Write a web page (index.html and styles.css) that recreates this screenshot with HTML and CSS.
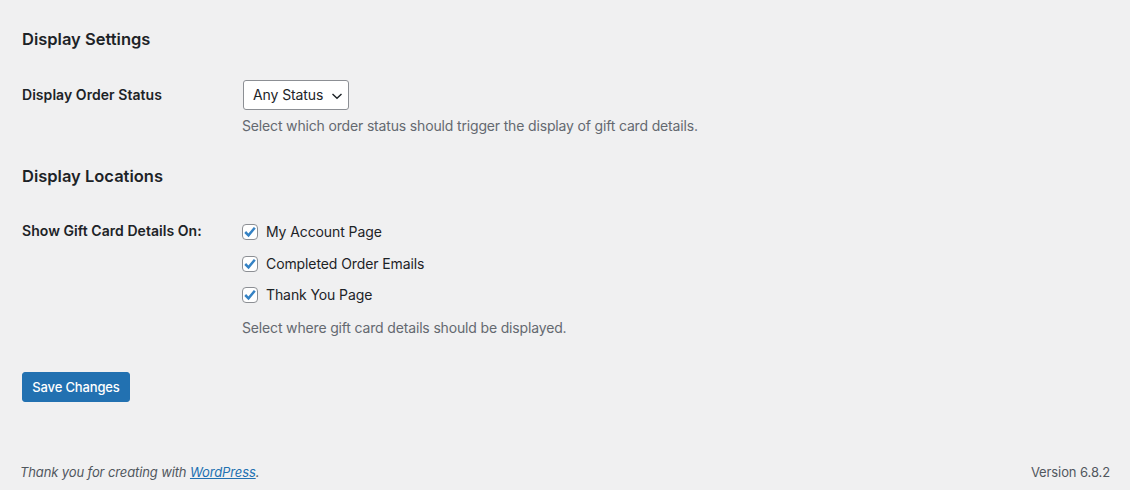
FILE: index.html
```html
<!DOCTYPE html>
<html lang="en">
<head>
<meta charset="utf-8">
<title>Gift Card Settings</title>
<link rel="stylesheet" href="styles.css">
</head>
<body>
<div class="page">
  <div class="wrap">
    <h2 class="section-title first">Display Settings</h2>
    <div class="form-row row-status">
      <div class="label">Display Order Status</div>
      <div class="field">
        <div class="select">
          <span>Any Status</span>
          <svg class="chev" width="14" height="12" viewBox="0 0 14 12"><path d="M2.5 4 L7 8.3 L11.5 4" fill="none" stroke="#1d2327" stroke-width="1.4"/></svg>
        </div>
        <p class="description">Select which order status should trigger the display of gift card details.</p>
      </div>
    </div>

    <h2 class="section-title second">Display Locations</h2>
    <div class="form-row row-locations">
      <div class="label">Show Gift Card Details On:</div>
      <div class="field">
        <label class="check"><span class="box"><svg width="14" height="14" viewBox="0 0 14 14"><path d="M2.2 7 L5.5 10.3 L11.8 2.8" fill="none" stroke="#3582c4" stroke-width="2.5"/></svg></span>My Account Page</label>
        <label class="check"><span class="box"><svg width="14" height="14" viewBox="0 0 14 14"><path d="M2.2 7 L5.5 10.3 L11.8 2.8" fill="none" stroke="#3582c4" stroke-width="2.5"/></svg></span>Completed Order Emails</label>
        <label class="check"><span class="box"><svg width="14" height="14" viewBox="0 0 14 14"><path d="M2.2 7 L5.5 10.3 L11.8 2.8" fill="none" stroke="#3582c4" stroke-width="2.5"/></svg></span>Thank You Page</label>
        <p class="description desc-loc">Select where gift card details should be displayed.</p>
      </div>
    </div>

    <div class="submit">
      <button class="button-primary" type="button">Save Changes</button>
    </div>
  </div>

  <footer class="footer">
    <p class="thanks">Thank you for creating with <a href="#">WordPress</a>.</p>
    <p class="version">Version 6.8.2</p>
  </footer>
</div>
</body>
</html>
```

FILE: styles.css
```css
* { box-sizing: border-box; }
html, body {
  margin: 0;
  padding: 0;
  background: #f0f0f1;
}
body {
  font-family: Inter, "Noto Sans", sans-serif;
  color: #1d2327;
  font-size: 14px;
  line-height: 1.4;
}
.page {
  width: 1130px;
  height: 490px;
  display: flex;
  flex-direction: column;
}
.wrap {
  padding: 0 22px;
  flex: 1;
}
.section-title {
  font-size: 16.5px;
  font-weight: 600;
  margin: 0;
  line-height: 22px;
  letter-spacing: 0;
}
.section-title.first { padding-top: 28px; }
.section-title.second { margin-top: 28px; }
.form-row {
  display: grid;
  grid-template-columns: 220px 1fr;
}
.row-status { margin-top: 30px; }
.label {
  font-weight: 600;
  font-size: 14px;
  line-height: 20px;
  letter-spacing: 0.05px;
}
.row-status .label { padding-top: 5px; }
.field { display: flex; flex-direction: column; align-items: flex-start; }
.select {
  margin-left: 1px;
  width: 106px;
  height: 30px;
  border: 1px solid #8c8f94;
  border-radius: 3px;
  background: #fff;
  display: flex;
  align-items: center;
  justify-content: space-between;
  padding: 0 4px 0 9px;
  font-size: 14px;
  letter-spacing: -0.1px;
}
.chev { display: block; margin-top: 1px; }
.description {
  margin: 5px 0 0;
  color: #646970;
  font-size: 14px;
  line-height: 22px;
  letter-spacing: -0.16px;
}
.row-locations { margin-top: 34px; }
.row-locations .field { padding-top: 3px; }
.check {
  display: flex;
  align-items: center;
  height: 16px;
  margin-bottom: 16px;
  font-size: 14px;
  letter-spacing: -0.1px;
}
.check:nth-child(2) { margin-bottom: 15px; }
.check:nth-child(3) { margin-bottom: 14px; }
.box {
  width: 16px;
  height: 16px;
  border: 1px solid #8c8f94;
  border-radius: 4px;
  background: #fff;
  margin-right: 8px;
  display: flex;
  align-items: center;
  justify-content: center;
}
.box svg { display: block; }
.desc-loc { margin-top: 0; }
.submit { margin-top: 33px; }
.button-primary {
  font-family: inherit;
  background: #2271b1;
  border: 1px solid #2271b1;
  color: #fff;
  border-radius: 3px;
  width: 108px;
  height: 30px;
  font-size: 13px;
  font-weight: 500;
  padding: 0;
  letter-spacing: -0.15px;
}
.footer {
  display: flex;
  justify-content: space-between;
  padding: 0 20px 8px 20px;
  color: #50575e;
  font-size: 13px;
}
.footer p { margin: 0; line-height: 20px; }
.thanks { font-style: italic; letter-spacing: -0.12px; }
.thanks a { color: #2271b1; text-decoration: underline; }
.version { letter-spacing: -0.1px; }
```
